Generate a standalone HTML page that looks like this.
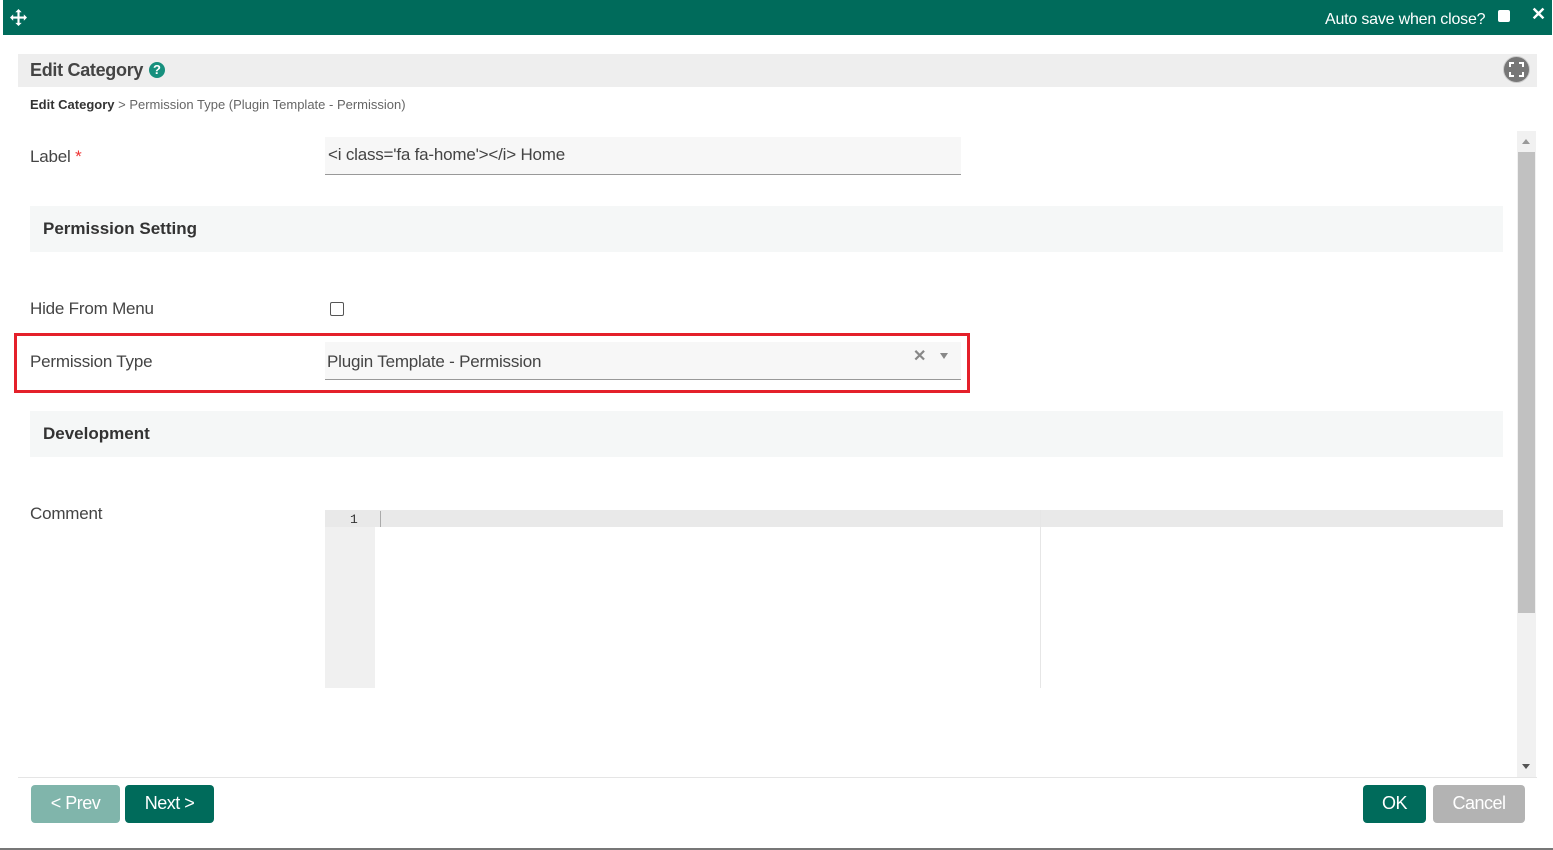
<!DOCTYPE html><html><head><style>
body{margin:0;width:1553px;height:850px;position:relative;background:#fff;font-family:"Liberation Sans",Arial,sans-serif;overflow:hidden;color:#333}
.a{position:absolute}
.lbl{font-size:17px;color:#444;letter-spacing:-0.2px}
.sec{left:30px;width:1473px;height:46px;background:#f5f7f7;font-weight:bold;font-size:17px;color:#333;line-height:46px;text-indent:13px}
.btn{border-radius:4px;color:#fff;font-size:18px;text-align:center;line-height:36px;height:38px;top:785px;letter-spacing:-0.5px}
</style></head><body>
<div class="a" style="left:3px;top:0;width:1549px;height:35px;background:#006b5b"></div>
<svg class="a" style="left:10px;top:9px" width="17" height="17" viewBox="0 0 16 16"><path fill="#fff" d="M8 0l3 3H9v4h4V5l3 3-3 3V9H9v4h2l-3 3-3-3h2V9H3v2L0 8l3-3v2h4V3H5z"/></svg>
<div class="a" style="left:1325px;top:11px;color:#fff;font-size:16px;letter-spacing:-0.2px">Auto save when close?</div>
<div class="a" style="left:1498px;top:10px;width:12px;height:12px;background:#fff;border-radius:2px"></div>
<div class="a" style="left:1531px;top:4px;color:#fff;font-size:18px;font-weight:bold">✕</div>
<div class="a" style="left:18px;top:54px;width:1519px;height:33px;background:#eee"></div>
<div class="a" style="left:30px;top:60px;font-size:18px;font-weight:bold;color:#444;letter-spacing:-0.3px">Edit Category</div>
<div class="a" style="left:149px;top:62px;width:16px;height:16px;border-radius:50%;background:#17907e;color:#fff;font-size:13px;font-weight:bold;text-align:center;line-height:16px">?</div>
<div class="a" style="left:1503px;top:56px;width:27px;height:27px;border-radius:50%;background:#777;border:1px solid #ccc;box-sizing:border-box"></div>
<svg class="a" style="left:1509px;top:62px" width="15" height="15" viewBox="0 0 15 15"><path d="M1 5V1h4M10 1h4v4M14 10v4h-4M5 14H1v-4" stroke="#fff" stroke-width="2" fill="none"/></svg>
<div class="a" style="left:30px;top:97px;font-size:13px;color:#666"><b style="color:#333">Edit Category</b> &gt; Permission Type (Plugin Template - Permission)</div>
<div class="a" style="left:1517px;top:131px;width:19px;height:646px;background:#f1f1f1"></div>
<div class="a" style="left:1518px;top:152px;width:17px;height:461px;background:#c1c1c1"></div>
<div class="a" style="left:1522px;top:139px;border:4px solid transparent;border-bottom:5px solid #999;border-top:0"></div>
<div class="a" style="left:1522px;top:764px;border:4px solid transparent;border-top:5px solid #555;border-bottom:0"></div>
<div class="a lbl" style="left:30px;top:147px">Label <span style="color:#e33">*</span></div>
<div class="a" style="left:325px;top:137px;width:636px;height:37px;background:#f7f7f7;border-bottom:1px solid #999"></div>
<div class="a lbl" style="left:328px;top:145px">&lt;i class='fa fa-home'&gt;&lt;/i&gt; Home</div>
<div class="a sec" style="top:206px">Permission Setting</div>
<div class="a lbl" style="left:30px;top:299px">Hide From Menu</div>
<div class="a" style="left:330px;top:302px;width:12px;height:12px;border:1px solid #555;border-radius:2px"></div>
<div class="a lbl" style="left:30px;top:352px">Permission Type</div>
<div class="a" style="left:325px;top:342px;width:636px;height:37px;background:#f7f7f7;border-bottom:1px solid #999"></div>
<div class="a lbl" style="left:327px;top:352px">Plugin Template - Permission</div>
<div class="a" style="left:913px;top:346px;font-size:16px;color:#888;font-weight:bold">✕</div>
<div class="a" style="left:940px;top:353px;border:4px solid transparent;border-top:6px solid #888;border-bottom:0"></div>
<div class="a" style="left:14px;top:333px;width:950px;height:54px;border:3px solid #e4202a"></div>
<div class="a sec" style="top:411px">Development</div>
<div class="a lbl" style="left:30px;top:504px">Comment</div>
<div class="a" style="left:325px;top:510px;width:50px;height:178px;background:#f0f0f0"></div>
<div class="a" style="left:325px;top:510px;width:1178px;height:17px;background:#e9e9e9"></div>
<div class="a" style="left:350px;top:512px;font-size:13px;font-family:'Liberation Mono',monospace;color:#333">1</div>
<div class="a" style="left:380px;top:511px;width:1px;height:16px;background:#aaa"></div>
<div class="a" style="left:1040px;top:510px;width:1px;height:178px;background:#e6e6e6"></div>
<div class="a" style="left:18px;top:777px;width:1519px;height:1px;background:#e5e5e5"></div>
<div class="a btn" style="left:31px;width:89px;background:#80b5ab">&lt; Prev</div>
<div class="a btn" style="left:125px;width:89px;background:#006b5b">Next &gt;</div>
<div class="a btn" style="left:1363px;width:63px;background:#006b5b">OK</div>
<div class="a btn" style="left:1433px;width:92px;background:#b3b3b3">Cancel</div>
<div class="a" style="left:0;top:848px;width:1553px;height:2px;background:#777"></div>
</body></html>
